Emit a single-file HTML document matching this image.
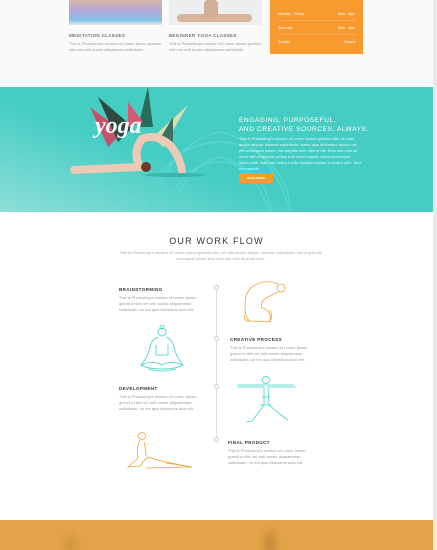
<!DOCTYPE html><html><head><style>
body{margin:0;width:437px;height:550px;position:relative;overflow:hidden;background:#fff;font-family:"Liberation Sans",sans-serif}
.a{position:absolute}
.t{font-size:4px;color:#999;line-height:6px}
.h{font-size:4.5px;font-weight:bold;letter-spacing:.4px;color:#333}
</style></head><body>
<div class="a" style="left:0;top:0;width:433px;height:87px;background:#fafafa"></div>
<div class="a" style="left:433px;top:0;width:4px;height:550px;background:#e8e8e8"></div>
<div class="a" style="left:69px;top:0;width:93px;height:25px;background:linear-gradient(180deg,#d7b9a8 0%,#b9a6d8 40%,#7fc3e3 80%,#e8e8ee)"></div>
<div class="a" style="left:169px;top:0;width:93px;height:25px;background:#eceeef"><div class="a" style="left:8px;top:14px;width:75px;height:8px;background:#d9b49a;border-radius:4px"></div><div class="a" style="left:35px;top:0;width:14px;height:18px;background:#d2ae96;border-radius:4px"></div></div>
<div class="a h" style="left:69px;top:33px;font-weight:normal">MEDITATION CLASSES</div>
<div class="a h" style="left:169px;top:33px;font-weight:normal">BEGINNER YOGA CLASSES</div>
<div class="a t" style="left:69px;top:41px;width:92px">This is Photoshop's version of Lorem Ipsum gravida nibh vel velit auctor aliquenean sollicitudin.</div>
<div class="a t" style="left:169px;top:41px;width:92px">This is Photoshop's version of Lorem Ipsum gravida nibh vel velit auctor aliquenean sollicitudin.</div>
<div class="a" style="left:270px;top:0;width:93px;height:54px;background:#f99a2f;color:#fff;font-size:3.6px">
<div class="a" style="left:8px;top:12px;width:77px;padding-bottom:4px;border-bottom:1px dotted #fbb96b">Monday - Friday<span style="float:right">9am - 5pm</span></div>
<div class="a" style="left:8px;top:26px;width:77px;padding-bottom:4px;border-bottom:1px dotted #fbb96b">Saturday<span style="float:right">9am - 1pm</span></div>
<div class="a" style="left:8px;top:40px;width:77px">Sunday<span style="float:right">Closed</span></div></div>
<div class="a" style="left:0;top:87px;width:433px;height:125px;background:linear-gradient(200deg,#45cdc4 60%,#8ddfd8)">
<svg class="a" style="left:70px;top:15px" width="300" height="110"><g fill="none" stroke="#5ad6cc" stroke-width="1.5"><circle cx="150" cy="110" r="70"/><circle cx="150" cy="110" r="50"/><path d="M80 110 Q100 40 150 30 Q200 40 220 110 M100 110 Q120 60 150 55 Q180 60 200 110"/></g></svg>
<svg class="a" style="left:78px;top:0" width="120" height="95"><g stroke="none"><path d="M12 20 L45 45 L30 60 Z" fill="#c9506a"/><path d="M20 10 L55 40 L40 55 Z" fill="#2c4a3e"/><path d="M70 0 L75 40 L60 40 Z" fill="#2a6b5a"/><path d="M110 18 L75 50 L85 60 Z" fill="#d9ddb0"/><path d="M50 15 L65 35 L50 40 Z" fill="#d45a76"/><path d="M95 30 L80 55 L95 60 Z" fill="#3c7060"/></g></svg>
<div class="a" style="left:95px;top:26px;font:italic bold 24px 'Liberation Serif',serif;color:#fff">yoga</div>
<svg class="a" style="left:70px;top:40px" width="150" height="50"><path d="M4 43 L70 40 Q62 25 72 12 Q85 6 100 18 Q110 30 112 44" stroke="#eccab6" stroke-width="8" fill="none" stroke-linecap="round"/><circle cx="76" cy="40" r="5" fill="#6b3b2a"/><ellipse cx="105" cy="48" rx="30" ry="2" fill="#3ab5ac"/></svg>
<div class="a" style="left:239px;top:29px;color:#fff;font-size:6.5px;letter-spacing:.6px;line-height:9px">ENGAGING, PURPOSEFUL,<br>AND CREATIVE SOURCES, ALWAYS.</div>
<div class="a t" style="left:239px;top:49px;width:122px;color:#e6fbf8">This is Photoshop's version of Lorem Ipsum gravida nibh vel velit auctor aliquet. Aenean sollicitudin, lorem quis bibendum auctor nisi elit consequat ipsum, nec sagittis sem nibh id elit. Duis sed odio sit amet nibh vulputate cursus a sit amet mauris. Morbi accumsan ipsum velit. Nam nec tellus a odio tincidunt auctor a ornare odio. Sed non mauris.</div>
<div class="a" style="left:239px;top:86px;width:34px;height:10px;background:#f99a2f;color:#fff;font-size:3px;line-height:10px;text-align:center;font-weight:bold">READ MORE</div>
</div>
<div class="a" style="left:0;top:236px;width:433px;text-align:center;font-size:9px;letter-spacing:1.2px;color:#333">OUR WORK FLOW</div>
<div class="a t" style="left:118px;top:250px;width:205px;text-align:center;color:#aaa">This is Photoshop's version of Lorem Ipsum gravida nibh vel velit auctor aliquet. Aenean sollicitudin, lorem quis elit consequat ipsum sem nibh sed odio sit amet nibh.</div>
<div class="a" style="left:216px;top:287px;width:1px;height:152px;background:#ddd"></div>
<div class="a" style="left:214px;top:285px;width:3px;height:3px;border:1px solid #ccc;border-radius:50%;background:#fff"></div>
<div class="a" style="left:214px;top:336px;width:3px;height:3px;border:1px solid #ccc;border-radius:50%;background:#fff"></div>
<div class="a" style="left:214px;top:384px;width:3px;height:3px;border:1px solid #ccc;border-radius:50%;background:#fff"></div>
<div class="a" style="left:214px;top:437px;width:3px;height:3px;border:1px solid #ccc;border-radius:50%;background:#fff"></div>
<div class="a h" style="left:119px;top:287px">BRAINSTORMING</div>
<div class="a t" style="left:119px;top:295px;width:86px">This is Photoshop's version of Lorem Ipsum gravid a nibh vel velit auctor aliquaenean sollicitudin, lor em quis bibendum auct elit.</div>
<div class="a h" style="left:230px;top:337px">CREATIVE PROCESS</div>
<div class="a t" style="left:230px;top:345px;width:86px">This is Photoshop's version of Lorem Ipsum gravid a nibh vel velit auctor aliquaenean sollicitudin, lor em quis bibendum auct elit.</div>
<div class="a h" style="left:119px;top:386px">DEVELOPMENT</div>
<div class="a t" style="left:119px;top:394px;width:86px">This is Photoshop's version of Lorem Ipsum gravid a nibh vel velit auctor aliquaenean sollicitudin, lor em quis bibendum auct elit.</div>
<div class="a h" style="left:228px;top:440px">FINAL PRODUCT</div>
<div class="a t" style="left:228px;top:448px;width:86px">This is Photoshop's version of Lorem Ipsum gravid a nibh vel velit auctor aliquaenean sollicitudin, lor em quis bibendum auct elit.</div>
<svg class="a" style="left:240px;top:280px" width="50" height="46"><g fill="none" stroke="#f4a13c" stroke-width=".8"><circle cx="41" cy="8" r="4"/><path d="M38 4 Q25 -1 15 5 Q5 10 5 25 Q5 38 10 41 L30 42 Q32 30 22 28 Q20 22 26 18 Q32 15 38 12 M10 41 Q3 42 5 35 M25 42 Q35 42 30 30"/></g></svg>
<svg class="a" style="left:138px;top:325px" width="48" height="50"><g fill="none" stroke="#3fd3c6" stroke-width=".8"><circle cx="24" cy="7" r="4"/><circle cx="24" cy="2" r="2"/><path d="M20 12 Q14 14 12 22 Q10 32 3 40 Q10 44 24 44 Q38 44 45 40 Q38 32 36 22 Q34 14 28 12 M18 20 L18 30 L30 30 L30 20 M3 40 Q15 35 24 40 Q33 35 45 40 M10 44 Q24 48 38 44"/></g></svg>
<svg class="a" style="left:236px;top:375px" width="62" height="50"><g fill="none" stroke="#3fd3c6" stroke-width=".8"><circle cx="30" cy="5" r="3.5"/><path d="M1 10 L58 10 M2 12 L28 12 L28 30 L16 46 L10 47 M32 12 L60 12 M32 12 L33 30 L45 40 L52 45 M26 22 L34 22 M24 30 L35 30"/></g></svg>
<svg class="a" style="left:126px;top:430px" width="68" height="40"><g fill="none" stroke="#f4a13c" stroke-width=".8"><circle cx="16" cy="6" r="3.5"/><path d="M14 10 Q10 20 12 28 L2 37 L14 36 Q18 30 22 27 Q30 30 45 33 Q55 35 66 37 L20 38 M18 12 Q20 20 20 26 M40 33 L66 37"/></g></svg>
<div class="a" style="left:0;top:520px;width:433px;height:30px;background:#e3a449"><div class="a" style="left:255px;top:0;width:30px;height:30px;background:radial-gradient(ellipse at 50% 80%,#c98a3a,transparent 60%)"></div><div class="a" style="left:55px;top:5px;width:30px;height:25px;background:radial-gradient(ellipse at 50% 80%,#d39541,transparent 60%)"></div></div>
</body></html>
